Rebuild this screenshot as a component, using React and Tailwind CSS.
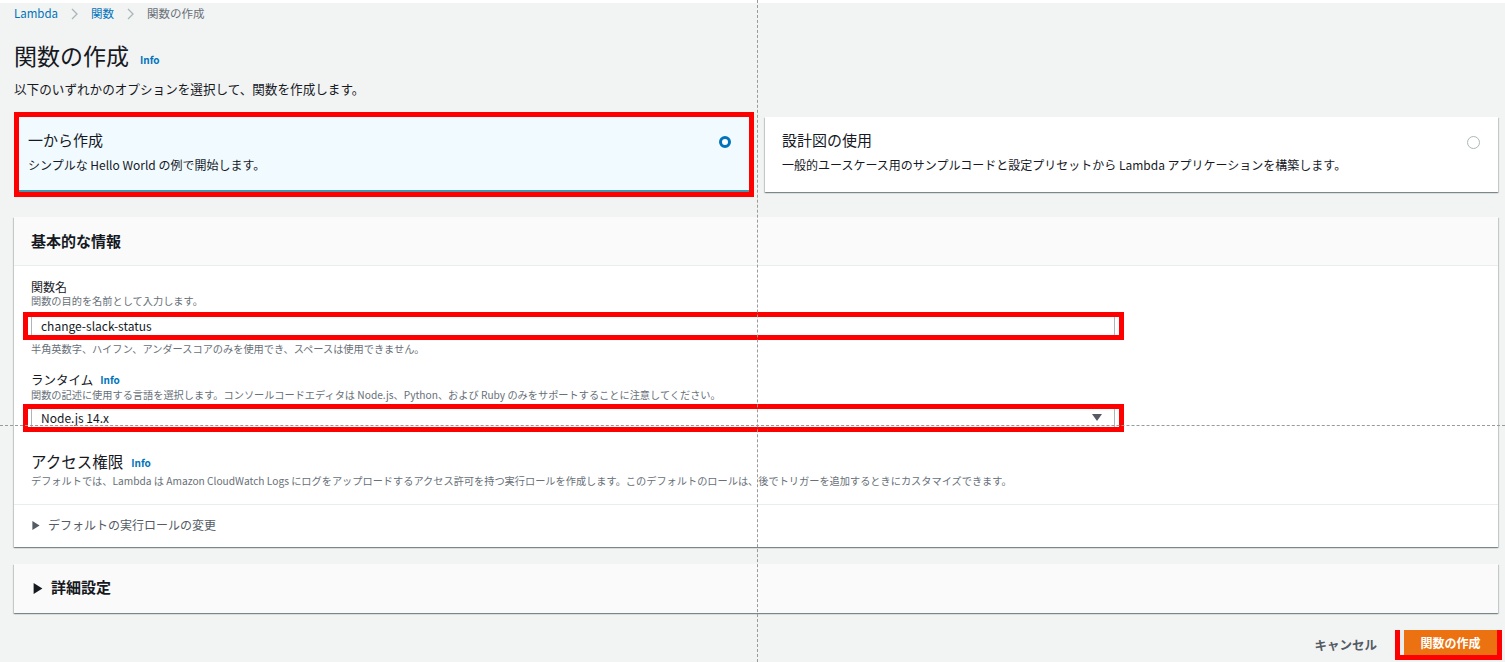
const jp = "font-['Noto_Sans_CJK_JP','Noto_Sans',sans-serif]";

const Info = ({ className = '' }) => (
  <span className={`text-[10px] font-bold text-[#0073bb] ${className}`}>Info</span>
);

const Chevron = () => (
  <svg width="7" height="12" viewBox="0 0 7 12" className="shrink-0">
    <path d="M1 1 L6 6 L1 11" fill="none" stroke="#aab7b8" strokeWidth="1.3" />
  </svg>
);

const Caret = ({ size = 9, color = '#16191f' }) => (
  <svg width={size - 1} height={size} viewBox="0 0 8 10" className="shrink-0">
    <path d="M0 0 L8 5 L0 10 Z" fill={color} />
  </svg>
);

const Radio = ({ checked }) =>
  checked ? (
    <span className="block w-[12px] h-[12px] rounded-full border-[3.5px] border-[#0073bb] bg-white" />
  ) : (
    <span className="block w-[13px] h-[13px] rounded-full border border-[#aab7b8] bg-white" />
  );

const Tile = ({ title, desc, checked }) => (
  <div
    className={`h-[75px] pr-[18px] flex justify-between ${
      checked
        ? 'pl-[9px] bg-[#f1faff] border-b-2 border-[#3f97b0]'
        : 'pl-[17px] bg-white shadow-[0_1px_1px_0_rgba(0,28,36,0.3),1px_1px_1px_0_rgba(0,28,36,0.15),-1px_1px_1px_0_rgba(0,28,36,0.15)]'
    }`}
  >
    <div className="pt-[13px]">
      <div className="text-[15px] leading-[20px] text-[#16191f]">{title}</div>
      <div className="mt-[7px] text-[12px] leading-[16px] text-[#16191f]">{desc}</div>
    </div>
    <div className="pt-[19px]">
      <Radio checked={checked} />
    </div>
  </div>
);

const Field = ({ children, select }) => (
  <div className="-ml-[8px] w-[1101px] h-[28px] border-[5px] border-[#ff0000] bg-white">
    <div className="ml-[3px] mr-[4px] h-full border-x border-[#aab7b8] flex items-center justify-between pl-[9px] pr-[12px] text-[12px] text-[#16191f]">
      <span>{children}</span>
      {select && (
        <svg width="10" height="8" viewBox="0 0 10 8">
          <path d="M0 0 H10 L5 7 Z" fill="#545b64" />
        </svg>
      )}
    </div>
  </div>
);

const panelShadow =
  'shadow-[0_1px_1px_0_rgba(0,28,36,0.3),1px_1px_1px_0_rgba(0,28,36,0.15),-1px_1px_1px_0_rgba(0,28,36,0.15)]';

const hint = 'text-[10.2px] leading-[14px] text-[#687078]';

export default function App() {
  return (
    <div className={`relative min-h-[662px] h-[662px] overflow-hidden bg-[#f2f3f3] text-[#16191f] ${jp}`}>
      <div className="h-[3px] bg-white" />
      <div className="pl-[14px] pr-[7px]">
        {/* breadcrumb */}
        <div className="h-[22px] flex items-center gap-[13px] text-[11.5px]">
          <span className="text-[#0073bb]">Lambda</span>
          <Chevron />
          <span className="text-[#0073bb]">関数</span>
          <Chevron />
          <span className="text-[#687078]">関数の作成</span>
        </div>

        <div className="mt-[14px] h-[32px] flex items-end gap-[11px]">
          <h1 className="text-[23px] leading-[32px] font-normal">関数の作成</h1>
          <Info className="mb-[4px]" />
        </div>
        <p className="mt-[9px] text-[12.6px] leading-[18px]">以下のいずれかのオプションを選択して、関数を作成します。</p>

        {/* option tiles */}
        <div className="mt-[14px] grid grid-cols-[740px_1fr] gap-[11px] items-center">
          <div className="border-[5px] border-[#ff0000]">
            <Tile checked title="一から作成" desc="シンプルな Hello World の例で開始します。" />
          </div>
          <Tile
            title="設計図の使用"
            desc="一般的ユースケース用のサンプルコードと設定プリセットから Lambda アプリケーションを構築します。"
          />
        </div>

        {/* basic info */}
        <div className={`mt-[20px] bg-white ${panelShadow}`}>
          <div className="h-[49px] bg-[#fafafa] border-b border-[#eaeded] flex items-center pl-[17px]">
            <h2 className="text-[15px] font-bold">基本的な情報</h2>
          </div>
          <div className="pl-[17px] pt-[13px]">
            <div className="text-[12px] leading-[15px]">関数名</div>
            <div className={hint}>関数の目的を名前として入力します。</div>
            <div className="mt-[4px]">
              <Field>change-slack-status</Field>
            </div>
            <div className={`mt-[2px] ${hint}`}>
              半角英数字、ハイフン、アンダースコアのみを使用でき、スペースは使用できません。
            </div>

            <div className="mt-[16px] flex items-end gap-[7px] leading-[16px]">
              <span className="text-[12.5px]">ランタイム</span>
              <Info />
            </div>
            <div className={hint}>
              関数の記述に使用する言語を選択します。コンソールコードエディタは Node.js、Python、および Ruby のみをサポートすることに注意してください。
            </div>
            <div className="mt-[2px]">
              <Field select>Node.js 14.x</Field>
            </div>

            <div className="mt-[18px] h-[22px] flex items-end gap-[8px]">
              <span className="text-[15.5px] leading-[22px]">アクセス権限</span>
              <Info className="mb-[2px]" />
            </div>
            <div className={`mt-[2px] ${hint}`}>
              デフォルトでは、Lambda は Amazon CloudWatch Logs にログをアップロードするアクセス許可を持つ実行ロールを作成します。このデフォルトのロールは、後でトリガーを追加するときにカスタマイズできます。
            </div>
          </div>
          <div className="mt-[16px] border-t border-[#eaeded] pl-[18px] pt-[11px] pb-[13px] flex items-center gap-[8px]">
            <Caret size={9} color="#545b64" />
            <span className="text-[12px] leading-[18px] text-[#545b64]">デフォルトの実行ロールの変更</span>
          </div>
        </div>

        {/* advanced */}
        <div className={`mt-[17px] h-[49px] bg-[#fafafa] ${panelShadow} flex items-center pl-[19px] gap-[8px]`}>
          <Caret size={11} />
          <span className="text-[15px] font-bold leading-[20px] -mt-[3px]">詳細設定</span>
        </div>

        {/* actions */}
        <div className="mt-[17px] flex justify-end items-center -mr-[4px]">
          <span className="text-[12.5px] font-bold text-[#545b64] mr-[18px]">キャンセル</span>
          <div className="w-[107px] h-[30px] border-x-[5px] border-b-[5px] border-[#ff0000] flex">
            <div className="w-[4px] bg-[#eaeded]" />
            <div className="flex-1 bg-[#ec7211] flex items-center justify-center text-white text-[12px] font-bold">
              関数の作成
            </div>
          </div>
        </div>
      </div>

      {/* dashed guides */}
      <div className="absolute top-0 bottom-0 left-[757px] border-l border-dashed border-[#9a9a9a]" />
      <div className="absolute left-0 right-0 top-[425px] border-t border-dashed border-[#9a9a9a]" />
    </div>
  );
}
